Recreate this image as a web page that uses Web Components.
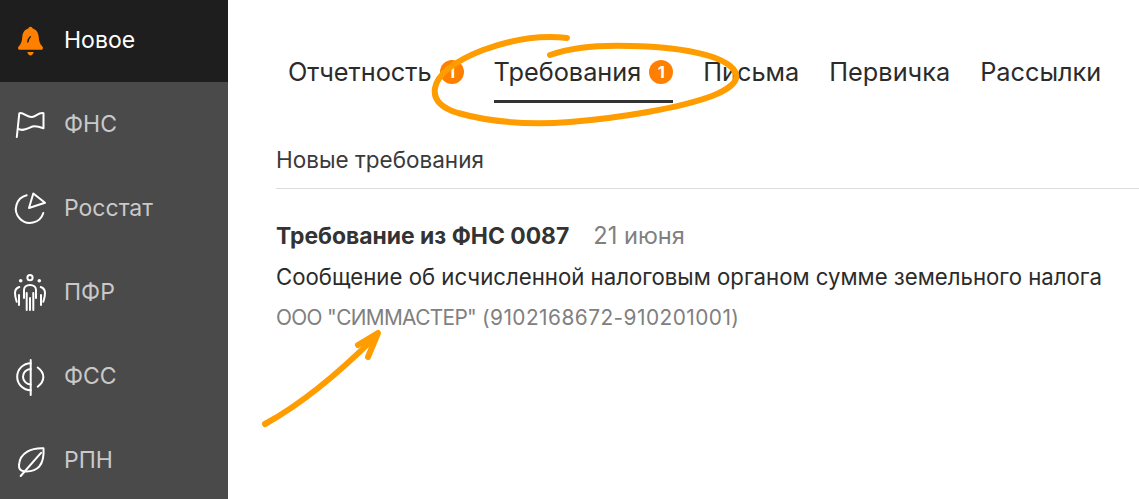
<!DOCTYPE html>
<html lang="ru">
<head>
<meta charset="utf-8">
<title>Новое</title>
<style>
  html, body { margin: 0; height: 100%; background: #fff; overflow: hidden; }
  body { font-family: Inter, "Noto Sans", sans-serif; }
  svg { display: block; overflow: visible; }
  .line { fill: none; stroke: #fff; stroke-width: 2; stroke-linecap: round; stroke-linejoin: round; }
</style>
</head>
<body>
<report-app>
  <nav-bar slot="nav">
    <nav-item active label="Новое">
      <svg slot="icon" width="32" height="32" viewBox="0 0 32 32">
        <g transform="translate(.5 0)">
          <path fill="#ff7f00" d="M16 1.700c1.300 0 2 .8 2.200 1.900 3.800 1.100 5.700 4.200 6 8.400.3 4.500 1.200 7.200 3.900 9.800.8.9.3 3-1 3H4.900c-1.300 0-1.800-2.100-1-3 2.700-2.600 3.600-5.300 3.900-9.800.3-4.200 2.200-7.300 6-8.400.2-1.100.9-1.900 2.200-1.900z"/>
          <path fill="#ff7f00" d="M12.800 27h6.400c-.6 2-1.700 3.500-3.200 3.500s-2.600-1.500-3.200-3.500z"/>
          <path fill="none" stroke="#1e1e1e" stroke-width="1.500" stroke-linecap="round" d="M13.300 17c.2-2 1-3.900 2.500-5.200"/>
        </g>
      </svg>
    </nav-item>
    <nav-item label="ФНС">
      <svg slot="icon" width="32" height="32" viewBox="0 0 32 32">
        <path class="line" d="M2.800 29 5.300 5.300C9 3.500 13 9.500 18 9c4-.5 7-5 11.500-3.700v15C26 19 22 17.500 18.500 18.500c-4.500 1.500-9.500 5.500-14.800 2"/>
      </svg>
    </nav-item>
    <nav-item label="Росстат">
      <svg slot="icon" width="32" height="32" viewBox="0 0 32 32">
        <path class="line" d="M12.700 3.300A14 14 0 1 0 29.300 21"/>
        <path class="line" d="M19.300 1.500 31 10.800 15 16z"/>
      </svg>
    </nav-item>
    <nav-item label="ПФР">
      <svg slot="icon" width="32" height="32" viewBox="0 0 32 32">
        <circle class="line" cx="16" cy="1.700" r="2.600"/>
        <circle cx="6.700" cy="4.700" r="1.800" fill="#fff"/>
        <circle cx="25.300" cy="4.700" r="1.800" fill="#fff"/>
        <path class="line" d="M10 22V14c0-3 2.500-5 6-5s6 2 6 5v8"/>
        <path class="line" d="M12.700 17v17M19.300 17v17M16 22v12"/>
        <path class="line" d="M5.300 11C2.500 12 1 14.500 1 17c0 3 .8 6 1.700 8.700M5 19v10"/>
        <path class="line" d="M26.700 11c2.800 1 4.300 3.500 4.300 6 0 3-.8 6-1.700 8.700M27 19v10"/>
      </svg>
    </nav-item>
    <nav-item label="ФСС">
      <svg slot="icon" width="32" height="32" viewBox="0 0 32 32">
        <path class="line" d="M16.700 0v35"/>
        <path class="line" d="M16.700 3.200A13.500 13.500 0 0 0 16.700 30.200"/>
        <path class="line" d="M16.700 9A7.700 7.700 0 0 0 16.700 24.400"/>
        <path class="line" d="M23.700 7.500c7.500 5.500 7.500 13.700 0 19.200"/>
      </svg>
    </nav-item>
    <nav-item label="РПН">
      <svg slot="icon" width="32" height="32" viewBox="0 0 32 32">
        <path class="line" d="M29.500 4.300C18 3.800 6 8.300 5 20.800c-.3 4 1.500 6 5 6.500 14 1 20.500-6.500 19.500-23z"/>
        <path class="line" d="M6.700 32 27 8.800"/>
      </svg>
    </nav-item>
  </nav-bar>
  <tab-row slot="main">
    <tab-item badge="1">Отчетность</tab-item>
    <tab-item badge="1" active>Требования</tab-item>
    <tab-item>Письма</tab-item>
    <tab-item>Первичка</tab-item>
    <tab-item>Рассылки</tab-item>
  </tab-row>
  <section-head slot="main">Новые требования</section-head>
  <message-card slot="main" date="21 июня" title="Требование из ФНС 0087" org="ООО &quot;СИММАСТЕР&quot;" inn="(9102168672-910201001)">
    Сообщение об исчисленной налоговым органом сумме земельного налога
  </message-card>
  <scribble-layer slot="over"></scribble-layer>
</report-app>

<script>
const FONT = 'Inter, "Noto Sans", sans-serif';

class ReportApp extends HTMLElement {
  connectedCallback() {
    this.attachShadow({ mode: 'open' }).innerHTML = `
      <style>
        :host { display: flex; position: relative; width: 1139px; height: 499px; overflow: hidden; font-family: ${FONT}; }
        .nav { flex: 0 0 228px; }
        .main { flex: 1; min-width: 0; padding-left: 48px; }
      </style>
      <div class="nav"><slot name="nav"></slot></div>
      <div class="main"><slot name="main"></slot></div>
      <slot name="over"></slot>`;
  }
}

class NavBar extends HTMLElement {
  connectedCallback() {
    this.attachShadow({ mode: 'open' }).innerHTML = `
      <style>
        :host { display: flex; flex-direction: column; height: 499px; background: #4a4a4a; overflow: hidden; }
      </style>
      <slot></slot>`;
  }
}

class NavItem extends HTMLElement {
  connectedCallback() {
    this.attachShadow({ mode: 'open' }).innerHTML = `
      <style>
        :host { display: flex; flex: none; align-items: center; gap: 18px; height: 84px; padding-left: 15px; color: #c9c9c9; font-size: 23px; }
        :host([active]) { height: 82px; background: #1e1e1e; color: #fff; }
        :host([active]) span { margin-bottom: 2px; }
        ::slotted(svg) { margin-left: -1px; }
      </style>
      <slot name="icon"></slot>
      <span>${this.getAttribute('label')}</span>`;
  }
}

class TabRow extends HTMLElement {
  connectedCallback() {
    this.attachShadow({ mode: 'open' }).innerHTML = `
      <style>
        :host { display: flex; gap: 30px; height: 103px; padding: 0 0 0 12px; box-sizing: border-box; }
      </style>
      <slot></slot>`;
  }
}

class TabItem extends HTMLElement {
  connectedCallback() {
    const badge = this.getAttribute('badge');
    this.attachShadow({ mode: 'open' }).innerHTML = `
      <style>
        :host { display: flex; align-items: center; gap: 8px; height: 103px; padding-top: 41px; box-sizing: border-box; color: #2b2b2b; font-size: 25.3px; line-height: 62px; }
        :host([active]) { box-shadow: inset 0 -3px 0 #333; }
        .badge { width: 24px; height: 24px; border-radius: 50%; background: #ff7f00; color: #fff; font-size: 16.5px; font-weight: 700; line-height: 24px; text-align: center; }
      </style>
      <slot></slot>${badge ? `<span class="badge">${badge}</span>` : ''}`;
  }
}

class SectionHead extends HTMLElement {
  connectedCallback() {
    this.attachShadow({ mode: 'open' }).innerHTML = `
      <style>
        :host { display: block; height: 86px; line-height: 114px; box-sizing: border-box; border-bottom: 1px solid #dcdcdc; color: #3a3a3a; font-size: 22.5px; }
      </style>
      <slot></slot>`;
  }
}

class MessageCard extends HTMLElement {
  connectedCallback() {
    const org = this.getAttribute('org').replace(/"/g, '&quot;');
    this.attachShadow({ mode: 'open' }).innerHTML = `
      <style>
        :host { display: block; padding-top: 27px; color: #2b2b2b; font-size: 22.2px; }
        .head { display: flex; align-items: baseline; gap: 24px; line-height: 40px; }
        b { color: #333; font-weight: 700; font-size: 22.9px; }
        .date { color: #808080; font-size: 23.6px; }
        .text { line-height: 42px; }
        .org { color: #808080; font-size: 20.85px; line-height: 39px; }
        .name { letter-spacing: -.65px; }
        .inn { letter-spacing: .45px; }
      </style>
      <div class="head"><b>${this.getAttribute('title')}</b><span class="date">${this.getAttribute('date')}</span></div>
      <div class="text"><slot></slot></div>
      <div class="org"><span class="name">${org}</span> <span class="inn">${this.getAttribute('inn')}</span></div>`;
  }
}

class ScribbleLayer extends HTMLElement {
  connectedCallback() {
    this.attachShadow({ mode: 'open' }).innerHTML = `
      <style>
        :host { position: absolute; inset: 0; pointer-events: none; }
        path { fill: none; stroke: #ff9d00; stroke-linecap: round; stroke-linejoin: round; }
      </style>
      <svg width="1139" height="499" viewBox="0 0 1139 499">
        <path stroke-width="6" d="M567 38C540 35 510 40 483 50C460 59 438 72 435 88C433 100 442 108 458 113C490 122 530 125 570 122C620 118 680 108 712 96C730 89 738 81 736 74C731 58 690 47 630 46C600 45 570 48 550 55"/>
        <path stroke-width="6" d="M265 424C305 402 340 372 376 336"/>
        <path stroke-width="6" d="M358 345 378 333 368 357"/>
      </svg>`;
  }
}

customElements.define('report-app', ReportApp);
customElements.define('nav-bar', NavBar);
customElements.define('nav-item', NavItem);
customElements.define('tab-row', TabRow);
customElements.define('tab-item', TabItem);
customElements.define('section-head', SectionHead);
customElements.define('message-card', MessageCard);
customElements.define('scribble-layer', ScribbleLayer);
</script>
</body>
</html>
